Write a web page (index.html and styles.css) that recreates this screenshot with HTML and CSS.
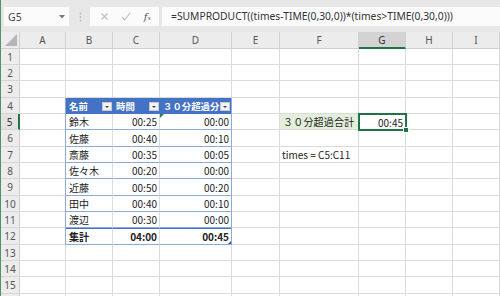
FILE: index.html
```html
<!DOCTYPE html>
<html lang="ja">
<head>
<meta charset="utf-8">
<title>Excel</title>
<link rel="stylesheet" href="styles.css">
</head>
<body>
<div class="app">
  <div class="fbar">
    <div class="namebox"><span>G5</span><svg class="nb-arrow" width="6" height="4" viewBox="0 0 6 4"><path d="M0 0h6L3 3.5z" fill="#777"/></svg></div>
    <svg class="grip" width="3" height="10" viewBox="0 0 3 10"><circle cx="1.5" cy="1.5" r="0.9" fill="#bbb"/><circle cx="1.5" cy="5" r="0.9" fill="#bbb"/><circle cx="1.5" cy="8.5" r="0.9" fill="#bbb"/></svg>
    <div class="btns">
      <svg width="9" height="9" viewBox="0 0 9 9"><path d="M1.5 1.5l6 6M7.5 1.5l-6 6" stroke="#bdbdbd" stroke-width="1.1" fill="none"/></svg>
      <svg width="10" height="9" viewBox="0 0 10 9"><path d="M1 5l2.8 3L9 1" stroke="#bdbdbd" stroke-width="1.1" fill="none"/></svg>
      <span class="fx">f<span class="fx-x">x</span></span>
    </div>
    <div class="formula">=SUMPRODUCT((times-TIME(0,30,0))*(times&gt;TIME(0,30,0)))</div>
  </div>

  <div class="sheet">
    <div class="corner"><svg width="12" height="12" viewBox="0 0 12 12"><path d="M12 0v12H0z" fill="#b5b5b5"/></svg></div>
    <div class="ch">A</div><div class="ch">B</div><div class="ch">C</div><div class="ch">D</div><div class="ch">E</div><div class="ch">F</div><div class="ch sel">G</div><div class="ch">H</div><div class="ch">I</div>

    <div class="rh">1</div><div class="c"></div><div class="c"></div><div class="c"></div><div class="c"></div><div class="c"></div><div class="c"></div><div class="c"></div><div class="c"></div><div class="c"></div>
    <div class="rh">2</div><div class="c"></div><div class="c"></div><div class="c"></div><div class="c"></div><div class="c"></div><div class="c"></div><div class="c"></div><div class="c"></div><div class="c"></div>
    <div class="rh">3</div><div class="c"></div><div class="c"></div><div class="c"></div><div class="c"></div><div class="c"></div><div class="c"></div><div class="c"></div><div class="c"></div><div class="c"></div>

    <div class="rh">4</div><div class="c"></div><div class="c"></div><div class="c"></div><div class="c"></div><div class="c"></div><div class="c"></div>
    <div class="rh sel">5</div><div class="c"></div><div class="c"></div><div class="c label">３０分超過合計</div><div class="c num active">00:45<span class="handle"></span></div><div class="c"></div><div class="c"></div>
    <div class="rh">6</div><div class="c"></div><div class="c"></div><div class="c"></div><div class="c"></div><div class="c"></div><div class="c"></div>
    <div class="rh">7</div><div class="c"></div><div class="c"></div><div class="c txt">times = C5:C11</div><div class="c"></div><div class="c"></div><div class="c"></div>
    <div class="rh">8</div><div class="c"></div><div class="c"></div><div class="c"></div><div class="c"></div><div class="c"></div><div class="c"></div>
    <div class="rh">9</div><div class="c"></div><div class="c"></div><div class="c"></div><div class="c"></div><div class="c"></div><div class="c"></div>
    <div class="rh">10</div><div class="c"></div><div class="c"></div><div class="c"></div><div class="c"></div><div class="c"></div><div class="c"></div>
    <div class="rh">11</div><div class="c"></div><div class="c"></div><div class="c"></div><div class="c"></div><div class="c"></div><div class="c"></div>
    <div class="rh">12</div><div class="c"></div><div class="c"></div><div class="c"></div><div class="c"></div><div class="c"></div><div class="c"></div>

    <div class="rh">13</div><div class="c"></div><div class="c"></div><div class="c"></div><div class="c"></div><div class="c"></div><div class="c"></div><div class="c"></div><div class="c"></div><div class="c"></div>
    <div class="rh">14</div><div class="c"></div><div class="c"></div><div class="c"></div><div class="c"></div><div class="c"></div><div class="c"></div><div class="c"></div><div class="c"></div><div class="c"></div>
    <div class="rh">15</div><div class="c"></div><div class="c"></div><div class="c"></div><div class="c"></div><div class="c"></div><div class="c"></div><div class="c"></div><div class="c"></div><div class="c"></div>
    <div class="rh"></div><div class="c"></div><div class="c"></div><div class="c"></div><div class="c"></div><div class="c"></div><div class="c"></div><div class="c"></div><div class="c"></div><div class="c"></div>

    <div class="xtable">
      <div class="th">名前<span class="filter"></span></div>
      <div class="th">時間<span class="filter"></span></div>
      <div class="th">３０分超過分<span class="filter"></span></div>

      <div class="td">鈴木</div><div class="td num">00:25</div><div class="td num flag">00:00</div>
      <div class="td">佐藤</div><div class="td num">00:40</div><div class="td num">00:10</div>
      <div class="td">斎藤</div><div class="td num">00:35</div><div class="td num">00:05</div>
      <div class="td">佐々木</div><div class="td num">00:20</div><div class="td num">00:00</div>
      <div class="td">近藤</div><div class="td num">00:50</div><div class="td num">00:20</div>
      <div class="td">田中</div><div class="td num">00:40</div><div class="td num">00:10</div>
      <div class="td">渡辺</div><div class="td num">00:30</div><div class="td num">00:00</div>

      <div class="td total">集計</div><div class="td num total">04:00</div><div class="td num total last">00:45</div>
    </div>
  </div>
</div>
</body>
</html>
```

FILE: styles.css
```css
html, body {
  margin: 0;
  padding: 0;
}
body {
  width: 500px;
  height: 296px;
  overflow: hidden;
  background: #ffffff;
  font-family: "Noto Sans CJK JP", "Noto Sans", sans-serif;
}
.app {
  width: 500px;
  height: 296px;
  overflow: hidden;
  box-sizing: border-box;
  border-left: 1px solid #4f9268;
}

/* formula bar */
.fbar {
  height: 32px;
  box-sizing: border-box;
  background: #e7e7e7;
  display: flex;
  align-items: flex-start;
  padding-top: 7px;
  padding-left: 3px;
}
.namebox {
  width: 65px;
  height: 19px;
  background: #fbfbfb;
  box-sizing: border-box;
  display: flex;
  align-items: center;
  justify-content: space-between;
  padding: 0 4px 0 4px;
  font-family: "Noto Sans", sans-serif;
  font-size: 10.5px;
  color: #444;
}
.grip {
  margin: 5px 0 0 10px;
}
.btns {
  margin-left: 8px;
  width: 69px;
  height: 19px;
  background: #fbfbfb;
  display: flex;
  align-items: center;
  justify-content: space-around;
  padding: 0 2px 0 4px;
  box-sizing: border-box;
}
.fx {
  font-family: "DejaVu Serif", serif;
  font-style: italic;
  font-size: 10px;
  color: #555;
}
.fx-x {
  font-size: 6px;
}
.formula {
  margin-left: 3px;
  flex: 1;
  height: 19px;
  background: #fbfbfb;
  box-sizing: border-box;
  padding-left: 9px;
  font-family: "Noto Sans", sans-serif;
  font-size: 10.3px;
  line-height: 19px;
  color: #333;
  white-space: nowrap;
  overflow: hidden;
}

/* sheet grid */
.sheet {
  display: grid;
  grid-template-columns: 19px 46px 47px 47px 72px 48px 79px 47px 47px 47px;
  grid-template-rows: 17px 16px 16px 17px 16px 16px 17px 16px 16px 17px 16px 16px 17px 16px 16px 17px 16px;
  font-size: 10px;
  color: #222;
}
.corner {
  background: #ececec;
  border-right: 1px solid #cfcfcf;
  border-bottom: 1px solid #cfcfcf;
  display: flex;
  align-items: flex-end;
  justify-content: flex-end;
  padding: 0 2px 2px 0;
}
.corner svg {
  display: block;
}
.ch {
  background: #ececec;
  border-right: 1px solid #d2d2d2;
  border-bottom: 1px solid #cfcfcf;
  display: flex;
  align-items: center;
  justify-content: center;
  font-family: "Noto Sans", sans-serif;
  font-size: 10px;
  color: #555;
}
.ch.sel {
  background: #d3d3d3;
  border-bottom: 2px solid #217346;
  color: #333;
}
.rh {
  background: #ececec;
  border-right: 1px solid #cfcfcf;
  border-bottom: 1px solid #d6d6d6;
  display: flex;
  align-items: center;
  justify-content: center;
  font-family: "Noto Sans", sans-serif;
  font-size: 10px;
  color: #555;
}
.rh.sel {
  background: #e2e2e2;
  border-right: 2px solid #217346;
  color: #333;
}
.c {
  border-right: 1px solid #dadada;
  border-bottom: 1px solid #dadada;
  white-space: nowrap;
  display: flex;
  align-items: center;
  padding: 0 2px;
  box-sizing: border-box;
  min-width: 0;
}
.c.label {
  background: #e2efda;
  padding-left: 3px;
  letter-spacing: 0.2px;
}
.c.txt {
  padding-left: 2px;
  overflow: visible;
}
.num {
  justify-content: flex-end;
}
.c.active {
  position: relative;
  z-index: 2;
  border: none;
  box-shadow: 0 0 0 1px #217346, inset 0 0 0 1px #217346;
  padding-right: 3px;
}
.handle {
  position: absolute;
  right: -3px;
  bottom: -3px;
  width: 4px;
  height: 4px;
  background: #217346;
  border: 1px solid #ffffff;
}

/* excel table */
.xtable {
  grid-column: 3 / 6;
  grid-row: 5 / 14;
  margin-left: -1px;
  z-index: 1;
  background: #ffffff;
  border-left: 1px solid #8ea9db;
  border-right: 1px solid #8ea9db;
  display: grid;
  grid-template-columns: 47px 47px 71px;
  grid-template-rows: 16px 16px 17px 16px 16px 17px 16px 16px 17px;
  position: relative;
}
.th {
  background: #4472c4;
  color: #ffffff;
  font-weight: bold;
  font-size: 9.4px;
  display: flex;
  align-items: center;
  justify-content: space-between;
  padding-left: 3px;
  white-space: nowrap;
}
.filter {
  width: 10px;
  height: 9px;
  flex: none;
  box-sizing: border-box;
  margin-right: 1px;
  background: #f3f3f3 url("data:image/svg+xml,%3Csvg xmlns='http://www.w3.org/2000/svg' width='10' height='9'%3E%3Cpath d='M3 4h4L5 6z' fill='%23444'/%3E%3C/svg%3E") no-repeat center;
  border: 1px solid #c8c8c8;
}
.td {
  border-bottom: 1px solid #8ea9db;
  border-right: 1px solid #dcdcdc;
  display: flex;
  align-items: center;
  padding: 0 2px 0 3px;
  white-space: nowrap;
  box-sizing: border-box;
  position: relative;
}
.td:nth-child(3n) {
  border-right: none;
}
.td.num {
  justify-content: flex-end;
}
.td.total {
  font-weight: bold;
  border-top: 1px solid #4472c4;
  border-bottom: 1px solid #8ea9db;
}
.td.flag::before {
  content: "";
  position: absolute;
  left: 0;
  top: 0;
  border-style: solid;
  border-width: 4px 4px 0 0;
  border-color: #1e8449 transparent transparent transparent;
}
.td.last::after {
  content: "";
  position: absolute;
  right: 0;
  bottom: 0;
  border-style: solid;
  border-width: 0 0 3px 3px;
  border-color: transparent transparent #2f5597 transparent;
}
```
